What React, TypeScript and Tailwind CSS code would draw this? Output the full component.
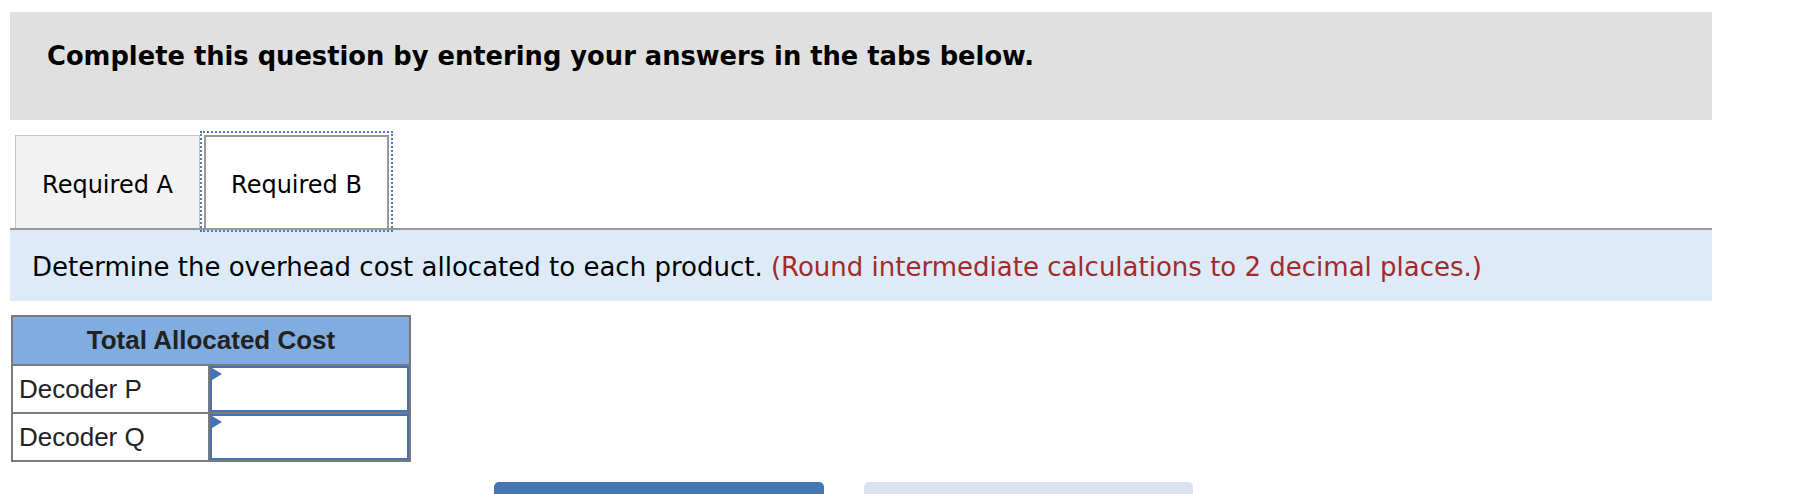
import React from 'react';

const rows = ['Decoder P', 'Decoder Q'];

const AnswerCell: React.FC = () => (
  <div className="relative h-full w-full min-w-0 border-2 border-[#4472b4] bg-white">
    <svg className="absolute left-0 top-0" width="10" height="12" viewBox="0 0 10 12">
      <polygon points="0,0 10,6 0,12" fill="#4472b4" />
    </svg>
    <input className="h-full w-full min-w-0 bg-transparent px-2 text-[20px] outline-none" aria-label="answer" />
  </div>
);

export default function App() {
  return (
    <div className="min-h-screen w-full overflow-hidden bg-white pl-[10px] font-['DejaVu_Sans',sans-serif] text-black">
      <div className="w-[1702px]">
        {/* Instructions banner */}
        <div className="mt-[12px] h-[108px] bg-[#e0e0e0] pl-[37px] pt-[29px]">
          <h2 className="text-[25.75px] font-bold leading-[30px]">
            Complete this question by entering your answers in the tabs below.
          </h2>
        </div>

        {/* Tabs */}
        <div className="flex h-[110px] items-end gap-[4px] border-b-2 border-[#999999] pl-[5px]">
          <button className="flex h-[93px] w-[185px] items-center justify-center border border-b-0 border-[#c4c4c4] bg-[#f2f2f2] pt-[5px] text-[24px] leading-[28px]">
            Required A
          </button>
          <button className="flex h-[93px] w-[185px] items-center justify-center border-2 border-b-0 border-[#999999] bg-white pt-[5px] text-[24px] leading-[28px] outline-2 outline-offset-2 outline-dotted outline-[#4a7bc4]">
            Required B
          </button>
        </div>

        {/* Question prompt */}
        <div className="h-[71px] bg-[#ddebf8] pl-[22px] pt-[22px] text-[26px] leading-[30px]">
          Determine the overhead cost allocated to each product.{' '}
          <span className="text-[#a32a27]">(Round intermediate calculations to 2 decimal places.)</span>
        </div>

        {/* Answer table */}
        <div className="ml-[1px] mt-[14px] w-[400px] border-2 border-[#7a7a7a] font-['Liberation_Sans',Arial,sans-serif] text-[#222222]">
          <div className="flex h-[49px] items-center justify-center border-b-2 border-[#7a7a7a] bg-[#80acdf] text-[26px] font-bold">
            Total Allocated Cost
          </div>
          {rows.map((label, i) => (
            <div
              key={label}
              className={i < rows.length - 1 ? 'flex h-[48px] border-b-2 border-[#7a7a7a]' : 'flex h-[46px]'}
            >
              <div className="flex w-[197px] shrink-0 items-center border-r-2 border-[#7a7a7a] pl-[6px] text-[26px]">
                {label}
              </div>
              <div className="min-w-0 flex-1">
                <AnswerCell />
              </div>
            </div>
          ))}
        </div>

        {/* Navigation buttons */}
        <div className="ml-[484px] mt-[20px] flex gap-[40px]">
          <button className="h-[64px] w-[330px] rounded-[5px] bg-[#4577b4]" aria-label="Previous" />
          <button className="h-[64px] w-[329px] rounded-[5px] bg-[#d9e3ef]" aria-label="Next" />
        </div>
      </div>
    </div>
  );
}
